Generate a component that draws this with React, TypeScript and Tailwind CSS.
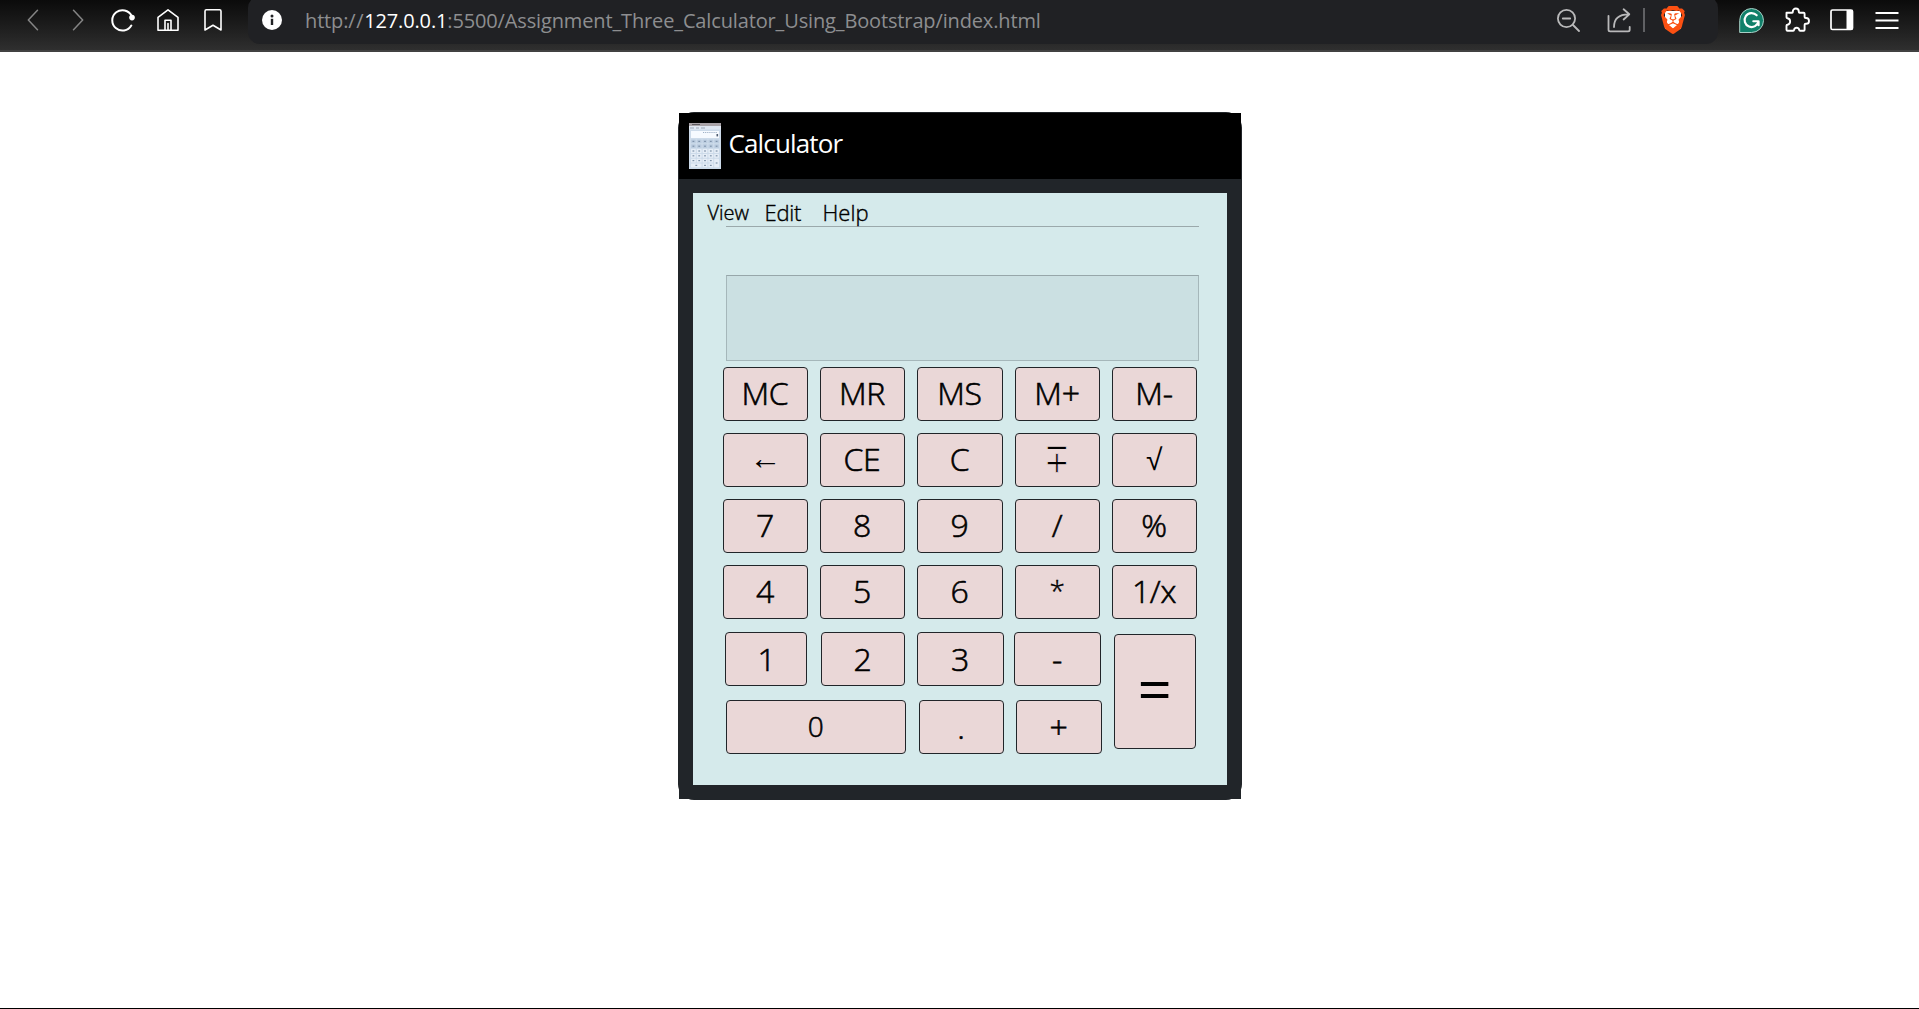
import React from "react";
import { SiBrave } from "react-icons/si";

function Thumbnail() {
  const keys: React.ReactNode[] = [];
  for (let r = 0; r < 6; r++) {
    for (let c = 0; c < 5; c++) {
      if ((r === 5 && c === 1) || (r === 5 && c === 4)) continue;
      const wide = r === 5 && c === 0;
      const tall = r === 4 && c === 4;
      keys.push(
        <g key={`${r}-${c}`}>
          <rect x={2 + c * 5.8} y={16.5 + r * 4.8} width={wide ? 10.6 : 4.8} height={tall ? 8.6 : 3.8} rx="0.6" fill={r < 2 ? "#bccde0" : "#e6eef7"} />
          <rect x={(wide ? 6.4 : 3.5) + c * 5.8} y={(tall ? 20.2 : 17.8) + r * 4.8} width="1.8" height="1.2" fill="#7f93aa" />
        </g>
      );
    }
  }
  return (
    <svg width="32" height="46" viewBox="0 0 32 46" className="shrink-0">
      <rect width="32" height="46" fill="#cddbea" />
      <rect width="32" height="3" fill="#a9a3a8" />
      <rect x="3" y="1" width="8" height="1" fill="#5c5a60" />
      <rect y="3" width="32" height="3.5" fill="#dfe7f2" />
      <path d="M1 5h4M7 5h3M12 5h4" stroke="#9aa4b4" strokeWidth="1" />
      <rect x="2" y="8" width="28" height="7" fill="#f6faff" />
      <path d="M14 9.5h14" stroke="#9fb0c6" strokeWidth="1" strokeDasharray="1.2 .9" />
      <rect x="27.5" y="11" width="1.6" height="2.4" fill="#4d5b70" />
      {keys}
    </svg>
  );
}

const line = { fill: "none", strokeLinecap: "round", strokeLinejoin: "round" } as const;

function Toolbar() {
  return (
    <header className="flex h-[52px] items-start border-b-2 border-[#414141] bg-linear-to-b from-[#0b0b0b] to-[#2f2f2f]">
      <div className="flex h-10 w-[248px] shrink-0 items-center">
        <svg width="12" height="22" viewBox="0 0 12 22" className="ml-[27px]" {...line} stroke="#858585" strokeWidth="1.5">
          <path d="M10.5 1.3 1.3 11l9.2 9.7" />
        </svg>
        <svg width="12" height="22" viewBox="0 0 12 22" className="ml-[33px]" {...line} stroke="#858585" strokeWidth="1.5">
          <path d="M1.500 1.300 10.700 11l-9.200 9.700" />
        </svg>
        <svg width="24" height="24" viewBox="0 0 24 24" className="ml-[27px]" {...line} stroke="#fff" strokeWidth="2">
          <path d="M20.600 7.800A10.200 10.200 0 1 0 20.300 17.500" />
          <circle cx="21" cy="9.600" r="2.800" fill="#fff" stroke="none" />
        </svg>
        <svg width="24" height="24" viewBox="0 0 24 24" className="ml-[21px]" {...line} stroke="#fff" strokeWidth="1.600">
          <path d="M2 9.300 12 1.800l10 7.500v13H2zM9 22V12.300h6V22M12 15.500V22" />
        </svg>
        <svg width="20" height="24" viewBox="0 0 20 24" className="ml-[23px]" {...line} stroke="#fff" strokeWidth="1.600">
          <path d="M2 22V3.200Q2 1.800 3.400 1.800h13.200Q18 1.800 18 3.200V22l-8-4.800z" />
        </svg>
      </div>
      <div className="-mt-1 flex h-12 w-[1470px] shrink-0 items-center rounded-[12px] bg-[#202124]">
        <svg width="20" height="20" viewBox="0 0 20 20" className="ml-[14px]">
          <circle cx="10" cy="10" r="10" fill="#fff" />
          <path d="M10 8.800V15" stroke="#202124" strokeWidth="2.400" />
          <circle cx="10" cy="6" r="1.500" fill="#202124" />
        </svg>
        <div className="ml-[23px] w-[1251px] whitespace-nowrap pt-px text-[20px] tracking-[-0.14px] text-[#8d8e90]">
          http:<span className="tracking-[0.6px]">//</span><span className="font-medium text-white">127.0.0.1</span>:5500/Assignment_Three_Calculator_Using_Bootstrap/index.html
        </div>
        <svg width="24" height="24" viewBox="0 0 24 24" {...line} stroke="#b9b9ba" strokeWidth="1.800">
          <circle cx="10.500" cy="10.500" r="8.600" />
          <path d="m17 17 6 6M6.800 10.500h7.400" />
        </svg>
        <svg width="26" height="26" viewBox="0 0 26 26" className="ml-[27px]" {...line} stroke="#b9b9ba" strokeWidth="1.800">
          <path d="M1.500 8.800v14q0 1.600 1.600 1.600h18q1.600 0 1.600-1.600v-3M7 20C7 13 10.500 7.300 21.500 7.300M16.600 2.300l5.700 5-5.700 5.200" />
        </svg>
        <div className="ml-[10px] h-6 w-[2px] bg-[#606164]" />
        <div className="relative ml-[16px] h-7 w-6">
          <div className="absolute inset-x-[4px] inset-y-[5px] bg-white" />
          <SiBrave className="absolute -left-[2px] top-0 h-7 w-7 text-[#fb5012]" />
        </div>
      </div>
      <div className="flex h-10 items-center">
        <svg width="25" height="25" viewBox="0 0 25 25" className="ml-[21px]">
          <path d="M12.500 .5a12 12 0 1 1 0 24H.7V12.500A12 12 0 0 1 12.500 .5z" fill="#11806a" stroke="#a8cfc6" strokeWidth="1" />
          <path d="M17.700 7.300A7 7 0 1 0 19.500 13.200h-5.200M19.600 13.200v4" {...line} stroke="#fff" strokeWidth="2.100" />
        </svg>
        <svg width="26" height="26" viewBox="0 0 26 26" className="ml-[20px]" {...line} stroke="#fff" strokeWidth="1.900">
          <path d="M2.500 5.800h5.700q.6 0 .6-.8V4.500a3 3 0 0 1 6 0V5q0 .8.800.8h4q1 0 1 1V10q0 1 1.200 1h.3a2.900 2.900 0 0 1 0 5.800h-.3q-1.200 0-1.200 1v5q0 1-1 1h-3.500q-.8 0-.9-.9a2.600 2.600 0 0 0-5.100 0q-.1.900-.9.900H3.500q-1 0-1-1v-4q0-.9.900-1a3.300 3.300 0 0 0 0-6.500q-.9-.1-.9-1z" />
        </svg>
        <svg width="24" height="22" viewBox="0 0 24 22" className="ml-[20px]">
          <rect x="1" y="1" width="21.500" height="19.500" rx="1.500" fill="none" stroke="#fff" strokeWidth="1.700" />
          <path d="M16.500 1h6v19.500h-6z" fill="#fff" />
        </svg>
        <svg width="24" height="20" viewBox="0 0 24 20" className="ml-[21px]" stroke="#fff" strokeWidth="2">
          <path d="M.5 3h23M.5 10.500h23M.5 18h23" />
        </svg>
      </div>
    </header>
  );
}

function Key({ children, className = "pb-[2px] text-[32px]" }: { children: React.ReactNode; className?: string }) {
  return (
    <button className={`flex shrink-0 items-center justify-center rounded-[4px] border border-[#212529] bg-[#ead7d7] leading-none font-light tracking-[-0.3px] text-black [-webkit-text-stroke:0.6px_black] ${className}`}>
      {children}
    </button>
  );
}

const ROWS: { id: string; label?: React.ReactNode }[] = [
  { id: "MC" },
  { id: "MR" },
  { id: "MS" },
  { id: "M+" },
  { id: "M-" },
  { id: "←", label: <span className="-mt-[3px] font-['Liberation_Sans',sans-serif] [-webkit-text-stroke:0px]">←</span> },
  { id: "CE" },
  { id: "C" },
  { id: "∓", label: <span className="-translate-y-[1px] scale-y-[1.4] font-['DejaVu_Sans',sans-serif] text-[31px] font-extralight [-webkit-text-stroke:0.9px_#ead7d7]">∓</span> },
  { id: "√", label: <span className="mt-[2px] font-['Liberation_Sans',sans-serif] text-[30px] [-webkit-text-stroke:0px]">√</span> },
  { id: "7" },
  { id: "8" },
  { id: "9" },
  { id: "/" },
  { id: "%" },
  { id: "4" },
  { id: "5" },
  { id: "6" },
  { id: "*", label: <span className="-mt-[3px] text-[28px] [-webkit-text-stroke:0.4px_black]">*</span> },
  { id: "1/x" },
];

function Calculator() {
  return (
    <main className="mx-auto mt-[60px] w-[564px] rounded-[16px] bg-[#212529] p-px">
      <div className="flex h-[66px] items-center bg-black pl-[10px] text-[26px] tracking-[-0.85px] text-white">
        <Thumbnail />
        <h1 className="-mt-[5px] ml-[8px]">Calculator</h1>
      </div>
      <div className="bg-[#212529] p-[14px]">
        <div className="h-[592px] bg-[#d5eaeb]">
          <nav className="flex h-[33px] items-end pl-[15px] leading-[26px] font-light text-black [-webkit-text-stroke:0.4px_black]">
            <span className="w-[57px] text-[20px]">View</span>
            <span className="w-[58px] pb-px text-[22px] tracking-[-0.2px]">Edit</span>
            <span className="pb-px text-[22px]">Help</span>
          </nav>
          <hr className="ml-[33px] w-[473px] border-[#9ba9ab]" />
          <div className="ml-[33px] mt-[48px] h-[86px] w-[473px] border border-[#a5b7ba] border-t-[#97a7aa] bg-[#cbe0e2]" />
          <div className="ml-[30px] mt-[6px] grid auto-rows-[54px] grid-cols-[85px_85px_86px_85px_85px] gap-[12px]">
            {ROWS.map(({ id, label }) => (
              <Key key={id}>{label ?? id}</Key>
            ))}
          </div>
          <div className="mt-[13px] flex items-start">
            <div className="w-[421px] shrink-0">
              <div className="flex pl-[32px]">
                <Key className="h-[54px] w-[82px] pl-[2px] text-[32px]">1</Key>
                <Key className="ml-[14px] h-[54px] w-[84px] text-[32px]">2</Key>
                <Key className="ml-[12px] h-[54px] w-[87px] text-[32px]">3</Key>
                <Key className="ml-[10px] h-[54px] w-[87px] text-[32px]">-</Key>
              </div>
              <div className="mt-[14px] flex pl-[33px]">
                <Key className="h-[54px] w-[180px] pb-[2px] text-[28px]">0</Key>
                <Key className="ml-[13px] h-[54px] w-[85px] pb-px text-[32px]">.</Key>
                <Key className="ml-[12px] h-[54px] w-[86px] text-[32px]">+</Key>
              </div>
            </div>
            <Key className="mt-[2px] h-[115px] w-[82px] text-[60px]">
              <span className="mb-[7px] font-normal [-webkit-text-stroke:0px]">=</span>
            </Key>
          </div>
        </div>
      </div>
    </main>
  );
}

export default function App() {
  return (
    <div className="flex h-[1009px] w-[1919px] flex-col overflow-hidden border-b border-black bg-white font-['Open_Sans','Noto_Sans','DejaVu_Sans',sans-serif]">
      <Toolbar />
      <Calculator />
    </div>
  );
}
